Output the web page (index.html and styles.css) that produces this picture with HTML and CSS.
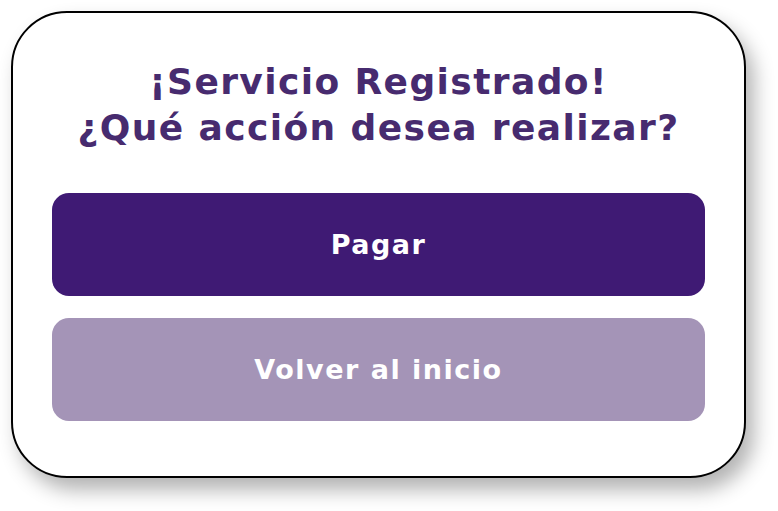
FILE: index.html
```html
<!DOCTYPE html>
<html lang="es">
<head>
<meta charset="utf-8">
<link rel="stylesheet" href="styles.css">
</head>
<body>
<div class="card">
  <h1 class="title">¡Servicio Registrado!<br>¿Qué acción desea realizar?</h1>
  <div class="actions">
    <button class="btn btn-primary">Pagar</button>
    <button class="btn btn-secondary">Volver al inicio</button>
  </div>
</div>
</body>
</html>
```
FILE: styles.css
```css
html, body {
  margin: 0;
  padding: 0;
  background: #ffffff;
}
body {
  padding: 11px 0 33px 11px;
  min-height: 511px;
  box-sizing: border-box;
  font-family: "DejaVu Sans", "Noto Sans", sans-serif;
}
.card {
  box-sizing: border-box;
  width: 735px;
  height: 467px;
  border: 2px solid #000;
  border-radius: 56px;
  background: #fff;
  box-shadow: 8px 12px 20px rgba(0,0,0,0.3);
  padding: 46px 39px 0 39px;
  display: flex;
  flex-direction: column;
}
.title {
  margin: 0;
  text-align: center;
  color: #472b6f;
  font-size: 36px;
  line-height: 46px;
  font-weight: 700;
  letter-spacing: 1.4px;
}
.actions {
  margin-top: 42px;
  display: flex;
  flex-direction: column;
  gap: 22px;
}
.btn {
  border: none;
  height: 103px;
  border-radius: 17px;
  color: #fff;
  font-family: inherit;
  font-size: 27px;
  font-weight: 700;
  letter-spacing: 1.5px;
}
.btn-primary { background: #3f1a74; }
.btn-secondary { background: #a494b7; }
```
